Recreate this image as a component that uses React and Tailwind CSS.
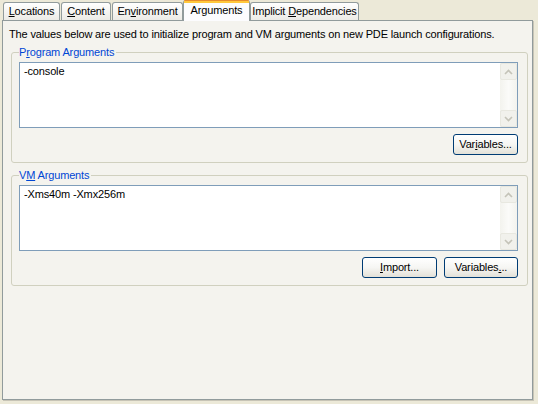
import React from 'react';

const tabs = [
  { label: 'Locations', key: 'L', rest: 'ocations', w: 'w-[57px]' },
  { label: 'Content', key: 'C', rest: 'ontent', w: 'w-[50px]' },
  { label: 'Environment', pre: 'En', key: 'v', rest: 'ironment', w: 'w-[71px]' },
  { label: 'Arguments', selected: true, w: 'w-[67px]' },
  { label: 'Implicit Dependencies', pre: 'Implicit ', key: 'D', rest: 'ependencies', w: 'w-[109px]' },
];

const Chevron = ({ up }) => (
  <svg width="9" height="6" viewBox="0 0 9 6">
    <path
      d={up ? 'M1 5 L4.5 1.5 L8 5' : 'M1 1 L4.5 4.5 L8 1'}
      fill="none"
      stroke="#C4C3B8"
      strokeWidth="1.6"
    />
  </svg>
);

const ScrollBar = () => (
  <div className="w-[17px] flex flex-col bg-gradient-to-r from-[#F3F3EE] via-[#FBFBF9] to-[#F3F3EE]">
    <div className="h-[17px] flex items-center justify-center rounded-[2px] border border-[#E8E8E0] bg-[#F1F1EC]">
      <Chevron up />
    </div>
    <div className="flex-1" />
    <div className="h-[17px] flex items-center justify-center rounded-[2px] border border-[#E8E8E0] bg-[#F1F1EC]">
      <Chevron />
    </div>
  </div>
);

const TextBox = ({ value }) => (
  <div className="h-[66px] flex border border-[#7F9DB9] bg-white">
    <div className="flex-1 pl-[4px] pt-[2px] leading-[13px] text-black">{value}</div>
    <ScrollBar />
  </div>
);

const Button = ({ children, w }) => (
  <button
    className={`${w} h-[21px] rounded-[3px] border border-[#003C74] bg-gradient-to-b from-white via-[#F6F6F3] to-[#E3E1D8] text-black leading-[13px] flex items-center justify-center`}
  >
    {children}
  </button>
);

const Group = ({ legend, children }) => (
  <fieldset className="ml-[8px] mr-[4px] rounded-[3px] border border-[#D0D0BF] pl-[7px] pr-[9px] pb-[7px]">
    <legend className="pr-[2px] text-[#0046D5] leading-[13px]">{legend}</legend>
    <div className="mt-[3px]">{children}</div>
  </fieldset>
);

export default function App() {
  return (
    <div className="w-[538px] h-[404px] bg-[#ECE9D8] text-[11px] tracking-[-0.15px] text-black font-['Tahoma','Liberation_Sans',sans-serif] overflow-hidden">
      {/* Tabs */}
      <div className="h-[20px] flex items-end pl-[3px]">
        {tabs.map((t) =>
          t.selected ? (
            <div
              key={t.label}
              className={`${t.w} h-[21px] -mb-[1px] -ml-[1px] relative z-10 border-x border-[#919B9C] bg-[#FCFCFE] rounded-t-[3px] flex flex-col`}
            >
              <div className="h-[1px] bg-[#E68B2C] rounded-t-[3px]" />
              <div className="h-[2px] bg-[#FFC83C]" />
              <div className="flex-1 text-center pt-[1px] leading-[13px]">{t.label}</div>
            </div>
          ) : (
            <div
              key={t.label}
              className={`${t.w} h-[18px] mr-[1px] border-t border-x border-[#919B9C] rounded-t-[3px] bg-gradient-to-b from-white to-[#ECEBE6] text-center pt-[2px] leading-[13px] whitespace-nowrap`}
            >
              {t.pre}
              <span className="underline">{t.key}</span>
              {t.rest}
            </div>
          )
        )}
      </div>

      {/* Panel */}
      <div className="ml-[2px] w-[531px] h-[380px] border border-[#919B9C] bg-[#F4F3EE] shadow-[1px_1px_0_#C7C4B6] pt-[7px]">
        <p className="pl-[6px] leading-[13px] mb-[5px] whitespace-nowrap">
          The values below are used to initialize program and VM arguments on new PDE launch configurations.
        </p>

        <Group
          legend={
            <>
              P<span className="underline">r</span>ogram Arguments
            </>
          }
        >
          <TextBox value="-console" />
          <div className="flex justify-end mt-[6px]">
            <Button w="w-[65px]">
              Var<span className="underline">i</span>ables...
            </Button>
          </div>
        </Group>

        <div className="h-[6px]" />

        <Group
          legend={
            <>
              V<span className="underline">M</span> Arguments
            </>
          }
        >
          <TextBox value="-Xms40m -Xmx256m" />
          <div className="flex justify-end gap-[7px] mt-[6px]">
            <Button w="w-[75px]">
              <span className="underline">I</span>mport...
            </Button>
            <Button w="w-[74px]">
              Variables<span className="underline">.</span>..
            </Button>
          </div>
        </Group>
      </div>
    </div>
  );
}
